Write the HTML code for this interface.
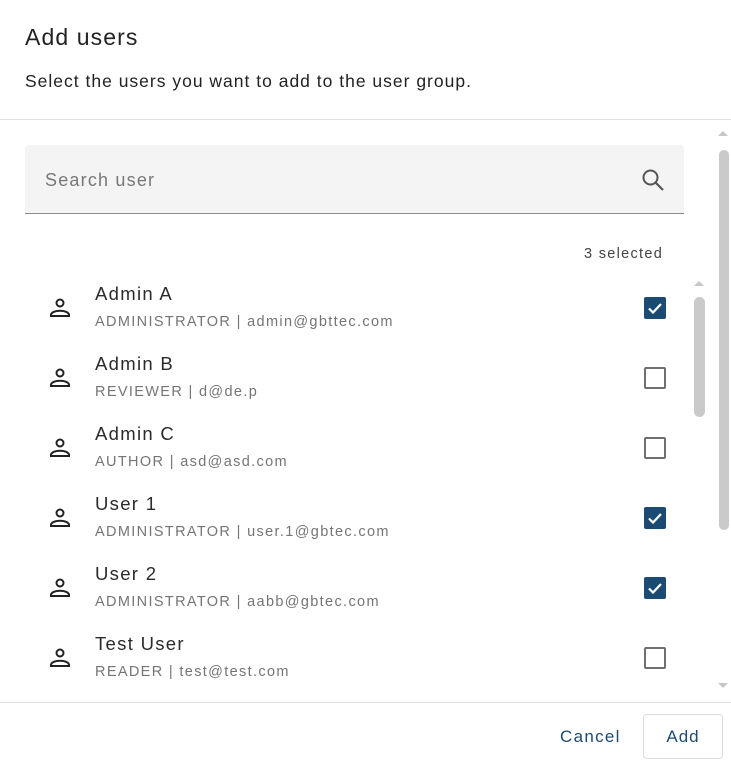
<!DOCTYPE html>
<html><head><style>
*{margin:0;padding:0;box-sizing:border-box}
body{width:731px;height:764px;background:#fff;font-family:"Liberation Sans",Roboto,sans-serif;position:relative;overflow:hidden;color:#222}
.a{position:absolute}
.row .n{position:absolute;left:95px;font-size:18.5px;color:#2b2b2b;letter-spacing:1.3px}
.row .s{position:absolute;left:95px;font-size:14.5px;color:#757575;letter-spacing:1.35px}
.cb{position:absolute;left:644px;width:22px;height:22px;border:2px solid #707070;border-radius:2px}
.cb.on{background:#1b4b72;border-color:#1b4b72}
</style></head><body>
<div class="a" style="left:25px;top:24px;font-size:23px;color:#222;letter-spacing:1.1px">Add users</div>
<div class="a" style="left:25px;top:71px;font-size:17.5px;color:#222;letter-spacing:1px">Select the users you want to add to the user group.</div>
<div class="a" style="left:0;top:119px;width:731px;height:1px;background:#e0e0e0"></div>
<div class="a" style="left:25px;top:145px;width:659px;height:69px;background:#f4f4f4;border-radius:4px 4px 0 0;border-bottom:1px solid #8a8a8a"></div>
<div class="a" style="left:45px;top:170px;font-size:18px;color:#777;letter-spacing:1.2px">Search user</div>
<svg class="a" style="left:640px;top:167px" width="26" height="26" viewBox="0 0 26 26"><circle cx="10.5" cy="10.5" r="7" fill="none" stroke="#555" stroke-width="2"/><line x1="15.5" y1="15.5" x2="23" y2="23" stroke="#555" stroke-width="2.2"/></svg>
<div class="a" style="left:584px;top:246px;font-size:14.5px;color:#444;letter-spacing:1.3px">3 selected</div>

<div class="row">
<svg class="a" style="left:49px;top:296px" width="22" height="24" viewBox="0 0 22 24"><circle cx="11" cy="7" r="3.5" fill="none" stroke="#222" stroke-width="2"/><path d="M2 20v-1c0-2.5 4-4.3 9-4.3s9 1.8 9 4.3v1z" fill="none" stroke="#222" stroke-width="2"/></svg>
<div class="n" style="top:283px">Admin A</div><div class="s" style="top:314px">ADMINISTRATOR | admin@gbttec.com</div>
<div class="cb on" style="top:297px"><svg width="18" height="18" viewBox="0 0 18 18"><path d="M3 9.5l4 4 8-8.5" fill="none" stroke="#fff" stroke-width="2.2"/></svg></div>
</div>
<div class="row">
<svg class="a" style="left:49px;top:366px" width="22" height="24" viewBox="0 0 22 24"><circle cx="11" cy="7" r="3.5" fill="none" stroke="#222" stroke-width="2"/><path d="M2 20v-1c0-2.5 4-4.3 9-4.3s9 1.8 9 4.3v1z" fill="none" stroke="#222" stroke-width="2"/></svg>
<div class="n" style="top:353px">Admin B</div><div class="s" style="top:384px">REVIEWER | d@de.p</div>
<div class="cb" style="top:367px"></div>
</div>
<div class="row">
<svg class="a" style="left:49px;top:436px" width="22" height="24" viewBox="0 0 22 24"><circle cx="11" cy="7" r="3.5" fill="none" stroke="#222" stroke-width="2"/><path d="M2 20v-1c0-2.5 4-4.3 9-4.3s9 1.8 9 4.3v1z" fill="none" stroke="#222" stroke-width="2"/></svg>
<div class="n" style="top:423px">Admin C</div><div class="s" style="top:454px">AUTHOR | asd@asd.com</div>
<div class="cb" style="top:437px"></div>
</div>
<div class="row">
<svg class="a" style="left:49px;top:506px" width="22" height="24" viewBox="0 0 22 24"><circle cx="11" cy="7" r="3.5" fill="none" stroke="#222" stroke-width="2"/><path d="M2 20v-1c0-2.5 4-4.3 9-4.3s9 1.8 9 4.3v1z" fill="none" stroke="#222" stroke-width="2"/></svg>
<div class="n" style="top:493px">User 1</div><div class="s" style="top:524px">ADMINISTRATOR | user.1@gbtec.com</div>
<div class="cb on" style="top:507px"><svg width="18" height="18" viewBox="0 0 18 18"><path d="M3 9.5l4 4 8-8.5" fill="none" stroke="#fff" stroke-width="2.2"/></svg></div>
</div>
<div class="row">
<svg class="a" style="left:49px;top:576px" width="22" height="24" viewBox="0 0 22 24"><circle cx="11" cy="7" r="3.5" fill="none" stroke="#222" stroke-width="2"/><path d="M2 20v-1c0-2.5 4-4.3 9-4.3s9 1.8 9 4.3v1z" fill="none" stroke="#222" stroke-width="2"/></svg>
<div class="n" style="top:563px">User 2</div><div class="s" style="top:594px">ADMINISTRATOR | aabb@gbtec.com</div>
<div class="cb on" style="top:577px"><svg width="18" height="18" viewBox="0 0 18 18"><path d="M3 9.5l4 4 8-8.5" fill="none" stroke="#fff" stroke-width="2.2"/></svg></div>
</div>
<div class="row">
<svg class="a" style="left:49px;top:646px" width="22" height="24" viewBox="0 0 22 24"><circle cx="11" cy="7" r="3.5" fill="none" stroke="#222" stroke-width="2"/><path d="M2 20v-1c0-2.5 4-4.3 9-4.3s9 1.8 9 4.3v1z" fill="none" stroke="#222" stroke-width="2"/></svg>
<div class="n" style="top:633px">Test User</div><div class="s" style="top:664px">READER | test@test.com</div>
<div class="cb" style="top:647px"></div>
</div>

<svg class="a" style="left:693px;top:279px" width="12" height="8"><path d="M1 7L6 2L11 7z" fill="#c8c8c8"/></svg>
<div class="a" style="left:694px;top:297px;width:11px;height:120px;background:#cacaca;border-radius:6px"></div>
<svg class="a" style="left:717px;top:129px" width="12" height="8"><path d="M1 7L6 2L11 7z" fill="#c8c8c8"/></svg>
<div class="a" style="left:719px;top:150px;width:10px;height:380px;background:#cacaca;border-radius:5px"></div>
<svg class="a" style="left:717px;top:682px" width="12" height="8"><path d="M1 1L6 6L11 1z" fill="#c8c8c8"/></svg>

<div class="a" style="left:0;top:702px;width:731px;height:1px;background:#e0e0e0"></div>
<div class="a" style="left:560px;top:727px;font-size:17px;color:#1d4a70;letter-spacing:1.3px">Cancel</div>
<div class="a" style="left:643px;top:714px;width:80px;height:45px;border:1px solid #ddd;border-radius:4px;text-align:center;line-height:43px;font-size:17px;color:#1d4a70;letter-spacing:1px">Add</div>
</body></html>
